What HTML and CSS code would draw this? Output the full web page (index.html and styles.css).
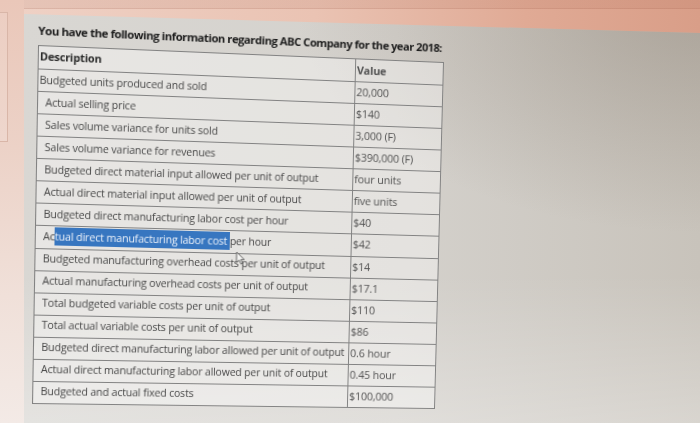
FILE: index.html
```html
<!DOCTYPE html>
<html lang="en">
<head>
<meta charset="utf-8">
<title>ABC Company information</title>
<link rel="stylesheet" href="styles.css">
</head>
<body>
<aside class="side"><div class="side-box"></div></aside>
<main class="screen">
  <div class="page">
    <h1 class="title">You have the following information regarding ABC Company for the year 2018:</h1>
    <div class="sheet">
      <table class="info">
        <colgroup><col class="c-desc"><col class="c-val"></colgroup>
        <thead>
          <tr><th class="desc flush">Description</th><th class="val">Value</th></tr>
        </thead>
        <tbody>
          <tr><td class="desc flush">Budgeted units produced and sold</td><td class="val">20,000</td></tr>
          <tr><td class="desc">Actual selling price</td><td class="val">$140</td></tr>
          <tr><td class="desc">Sales volume variance for units sold</td><td class="val">3,000 (F)</td></tr>
          <tr><td class="desc">Sales volume variance for revenues</td><td class="val">$390,000 (F)</td></tr>
          <tr><td class="desc">Budgeted direct material input allowed per unit of output</td><td class="val">four units</td></tr>
          <tr><td class="desc">Actual direct material input allowed per unit of output</td><td class="val">five units</td></tr>
          <tr><td class="desc">Budgeted direct manufacturing labor cost per hour</td><td class="val">$40</td></tr>
          <tr><td class="desc">Ac<span class="sel">tual direct manufacturing labor cost </span>per hour</td><td class="val">$42</td></tr>
          <tr><td class="desc">Budgeted manufacturing overhead costs per unit of output</td><td class="val">$14</td></tr>
          <tr><td class="desc">Actual manufacturing overhead costs per unit of output</td><td class="val">$17.1</td></tr>
          <tr><td class="desc">Total budgeted variable costs per unit of output</td><td class="val">$110</td></tr>
          <tr><td class="desc">Total actual variable costs per unit of output</td><td class="val">$86</td></tr>
          <tr><td class="desc">Budgeted direct manufacturing labor allowed per unit of output</td><td class="val">0.6 hour</td></tr>
          <tr><td class="desc">Actual direct manufacturing labor allowed per unit of output</td><td class="val">0.45 hour</td></tr>
          <tr><td class="desc">Budgeted and actual fixed costs</td><td class="val">$100,000</td></tr>
        </tbody>
      </table>
      <svg class="cursor" width="10" height="14" viewBox="0 0 10 14" aria-hidden="true">
        <path d="M1 1 L1 11.5 L3.6 9 L5.6 13 L7.2 12.2 L5.3 8.4 L8.8 8.4 Z" fill="#f4f4f2" stroke="#5a5a5a" stroke-width="0.9" stroke-linejoin="round"/>
      </svg>
    </div>
  </div>
</main>
</body>
</html>
```
FILE: styles.css
```css
html, body {
  margin: 0;
  padding: 0;
}
body {
  width: 700px;
  height: 423px;
  overflow: hidden;
  display: flex;
  font-family: "Open Sans", "Noto Sans", "DejaVu Sans", sans-serif;
  background:
    linear-gradient(to bottom, rgba(150, 80, 60, 0.10) 0 8px, rgba(150, 80, 60, 0.22) 8px 9px, transparent 9px),
    linear-gradient(to right, #efd2c6 0%, #eac3b3 45%, #e0aa95 75%, #d99e88 100%);
}
.side {
  flex: none;
  width: 24px;
  padding-top: 12px;
  box-sizing: border-box;
  background: linear-gradient(to bottom, #eac7b9 0%, #ecd2c7 35%, #f0e0d9 70%, #f3eae6 100%);
}
.side-box {
  width: 7px;
  height: 128px;
  border: 1px solid #d9b6a8;
  border-left: none;
  background: rgba(255, 255, 255, 0.12);
}
.screen {
  flex: 1;
  padding: 20px 0 0 14px;
  clip-path: polygon(0 14px, 100% 33px, 100% 100%, 0 100%);
  background:
    radial-gradient(ellipse 60% 55% at 100% 0%, rgba(130, 118, 105, 0.42), rgba(130, 118, 105, 0) 100%),
    linear-gradient(to bottom, rgba(255, 255, 255, 0) 65%, rgba(255, 255, 255, 0.30) 100%),
    linear-gradient(to right, #d9d7d3 0%, #d4d1cc 55%, #c8c3bb 100%);
}
.page {
  width: 400px;
  transform-origin: 0 25px;
  transform: matrix3d(1.047395, 0.043965, 0, 0.00008616,
                      -0.017040, 1.019594, 0, 0.00002319,
                      0, 0, 1, 0,
                      0, 0, 0, 1);
}
.title {
  margin: 0;
  height: 25px;
  line-height: 22px;
  font-size: 11.1px;
  font-weight: 700;
  letter-spacing: -0.45px;
  white-space: nowrap;
  color: #1c1c1c;
}
.sheet {
  position: relative;
}
.info {
  width: 400px;
  height: 355px;
  border-collapse: collapse;
  table-layout: fixed;
  border: 1px solid #666;
  background: rgba(255, 255, 255, 0.38);
  font-size: 10.4px;
  letter-spacing: -0.15px;
  color: #484848;
}
.c-desc { width: 311px; }
.c-val { width: 89px; }
.info tr { height: 22px; }
.info thead tr { height: 23px; }
.info th,
.info td {
  border: 1px solid #828282;
  padding: 0 0 2px 7px;
  text-align: left;
  vertical-align: middle;
  white-space: nowrap;
  overflow: hidden;
  font-weight: 400;
}
.info .flush { padding-left: 1px; }
.info .val { padding-left: 1px; color: #525252; font-size: 10.8px; }
.info th {
  font-weight: 700;
  color: #2a2a2a;
  font-size: 10.6px;
}
.sel {
  background: #3776c0;
  color: #eef3fa;
  padding: 2px 0 2px;
}
.cursor {
  position: absolute;
  left: 196px;
  top: 198px;
}
```
